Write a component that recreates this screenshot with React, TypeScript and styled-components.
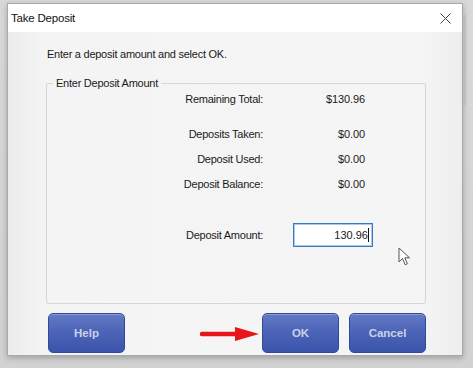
import styled, { createGlobalStyle } from 'styled-components';

const Global = createGlobalStyle`
  html, body {
    margin: 0;
    padding: 0;
    background: #d6d6d6;
    font-family: 'Liberation Sans', Arial, sans-serif;
  }
`;

function App() {
  return (
    <>
      <Global />
      <Screen>
        <Window>
          <TitleBar>
            <Title>Take Deposit</Title>
            <Close>
              <svg width="11" height="11" viewBox="0 0 11 11">
                <path d="M0.5 0.5 L10.5 10.5 M10.5 0.5 L0.5 10.5" stroke="#444" strokeWidth="1" />
              </svg>
            </Close>
          </TitleBar>
          <Body>
            <Prompt>Enter a deposit amount and select OK.</Prompt>
            <Group>
              <Legend>Enter Deposit Amount</Legend>
              <Rows>
                <Label>Remaining Total:</Label>
                <Value>$130.96</Value>
                <Label gap>Deposits Taken:</Label>
                <Value gap>$0.00</Value>
                <Label>Deposit Used:</Label>
                <Value>$0.00</Value>
                <Label>Deposit Balance:</Label>
                <Value>$0.00</Value>
                <Label amount>Deposit Amount:</Label>
                <Field>
                  130.96<Caret />
                </Field>
              </Rows>
              <Cursor>
                <svg width="14" height="20" viewBox="0 0 14 20">
                  <path
                    d="M1 1 L1 15 L4.5 11.5 L7.2 17.8 L9.4 16.8 L6.8 10.8 L11.5 10.8 Z"
                    fill="#fff"
                    stroke="#555"
                    strokeWidth="1"
                    strokeLinejoin="round"
                  />
                </svg>
              </Cursor>
            </Group>
            <Buttons>
              <Button>Help</Button>
              <Right>
                <Arrow>
                  <svg width="60" height="16" viewBox="0 0 60 16">
                    <path d="M2 8 L38 8" stroke="#e8141a" strokeWidth="4.5" strokeLinecap="round" />
                    <path d="M35 1 L59 8 L35 15 Z" fill="#e8141a" />
                  </svg>
                </Arrow>
                <Button>OK</Button>
                <Button>Cancel</Button>
              </Right>
            </Buttons>
          </Body>
        </Window>
        <Edge />
      </Screen>
    </>
  );
}

export default App;

const Screen = styled.div`
  width: 473px;
  height: 368px;
  padding: 3px 0 0 7px;
  box-sizing: border-box;
  display: flex;
  align-items: flex-start;
  background: linear-gradient(#d9d9d9, #d2d2d2);
  overflow: hidden;
`;

const Window = styled.div`
  width: 456px;
  height: 353px;
  box-sizing: border-box;
  border: 1px solid #a9a9a9;
  background: linear-gradient(90deg, #ececec, #f4f4f4 8%, #f5f5f5 90%, #eeeeee);
  box-shadow: 0 2px 6px rgba(0, 0, 0, 0.25);
  display: flex;
  flex-direction: column;
`;

const Edge = styled.div`
  width: 3px;
  height: 90px;
  margin-top: 12px;
  background: #bdbdbd;
`;

const TitleBar = styled.div`
  height: 28px;
  background: #fff;
  display: flex;
  align-items: center;
  justify-content: space-between;
  padding: 0 11px 0 3px;
`;

const Title = styled.span`
  font-size: 11.5px;
  letter-spacing: -0.2px;
  color: #111;
`;

const Close = styled.span`
  display: flex;
  align-items: center;
`;

const Body = styled.div`
  flex: 1;
  padding: 0 36px 0 38px;
  display: flex;
  flex-direction: column;
`;

const Prompt = styled.div`
  font-size: 11px;
  letter-spacing: -0.25px;
  color: #1a1a1a;
  margin: 15px 0 0 1px;
  height: 14px;
  line-height: 14px;
`;

const Group = styled.fieldset`
  position: relative;
  margin: 15px 0 0 0;
  padding: 0;
  height: 226px;
  border: 1px solid #d6d6d6;
  border-radius: 2px;
`;

const Legend = styled.legend`
  font-size: 11px;
  letter-spacing: -0.25px;
  color: #1a1a1a;
  margin-left: 6px;
  padding: 0 3px;
  line-height: 14px;
`;

const Rows = styled.div`
  display: grid;
  grid-template-columns: 216px 102px;
  column-gap: 30px;
  row-gap: 11px;
  align-items: center;
  margin-top: 2px;
`;

const Label = styled.div<{ gap?: boolean; amount?: boolean }>`
  font-size: 11px;
  letter-spacing: -0.25px;
  color: #1a1a1a;
  text-align: right;
  line-height: 14px;
  margin-top: ${({ gap, amount }) => (gap ? '10px' : amount ? '21px' : '0')};
`;

const Value = styled.div<{ gap?: boolean }>`
  font-size: 11px;
  letter-spacing: -0.1px;
  color: #1a1a1a;
  text-align: right;
  width: 72px;
  line-height: 14px;
  margin-top: ${({ gap }) => (gap ? '10px' : '0')};
`;

const Field = styled.div`
  margin-top: 21px;
  width: 80px;
  height: 24px;
  box-sizing: border-box;
  border: 1px solid #3a79c4;
  box-shadow: inset 0 0 0 1px #a9c8ec;
  background: #fff;
  font-size: 11px;
  color: #1a1a1a;
  display: flex;
  align-items: center;
  justify-content: flex-end;
  padding-right: 3px;
`;

const Caret = styled.span`
  display: inline-block;
  width: 1px;
  height: 14px;
  background: #111;
`;

const Cursor = styled.div`
  position: absolute;
  left: 351px;
  top: 157px;
`;

const Buttons = styled.div`
  display: flex;
  justify-content: space-between;
  margin-top: 9px;
  padding: 0 0 0 2px;
`;

const Right = styled.div`
  display: flex;
  align-items: center;
  gap: 10px;
`;

const Arrow = styled.div`
  display: flex;
  margin-right: -8px;
  margin-top: 1px;
`;

const Button = styled.button`
  width: 77px;
  height: 40px;
  border: 1px solid #2f4a9c;
  border-radius: 5px;
  background: linear-gradient(#6478c4, #4d65b8 45%, #3a54aa);
  box-shadow: inset 0 1px 0 rgba(255, 255, 255, 0.25);
  color: #c9d2ea;
  font-family: 'Liberation Sans', Arial, sans-serif;
  font-weight: bold;
  font-size: 11.5px;
  padding: 0;
`;
